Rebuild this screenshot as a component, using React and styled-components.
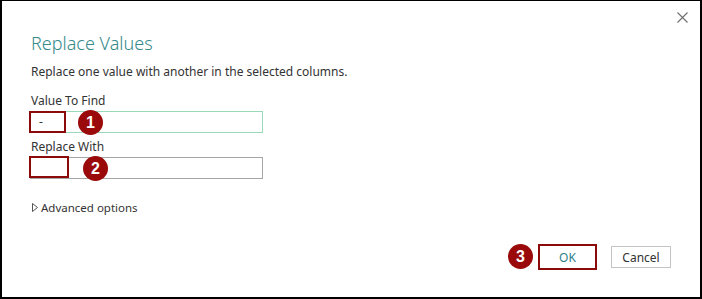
import React from 'react';
import styled, { createGlobalStyle } from 'styled-components';

const GlobalStyle = createGlobalStyle`
  html, body {
    margin: 0;
    padding: 0;
    background: #ffffff;
  }
  body {
    font-family: "Segoe UI", "Noto Sans", "Open Sans", sans-serif;
    color: #333333;
  }
`;

const Frame = styled.div`
  box-sizing: border-box;
  width: 702px;
  height: 299px;
  border-style: solid;
  border-color: #000000;
  border-width: 1px 2px 2px 2px;
  background: #ffffff;
  display: flex;
  flex-direction: column;
  position: relative;
`;

const TopBar = styled.div`
  display: flex;
  justify-content: flex-end;
  padding: 8px 10px 0 0;
  height: 16px;
`;

const CloseButton = styled.button`
  border: none;
  background: none;
  padding: 0;
  width: 16px;
  height: 16px;
  display: flex;
  align-items: center;
  justify-content: center;
  cursor: pointer;
`;

const Body = styled.div`
  display: flex;
  flex-direction: column;
  padding: 0 0 0 28px;
  flex: 1;
`;

const Title = styled.h1`
  margin: 6px 0 0 1px;
  font-size: 18px;
  font-weight: 300;
  color: #35898b;
  line-height: 24px;
`;

const Subtitle = styled.p`
  margin: 8px 0 0 1px;
  font-size: 12px;
  line-height: 17px;
  color: #333333;
`;

const Field = styled.div`
  display: flex;
  flex-direction: column;
  margin-top: ${p => p.gap}px;
`;

const Label = styled.label`
  margin-left: 1px;
  font-size: 12px;
  line-height: 17px;
  color: #333333;
`;

const InputWrap = styled.div`
  position: relative;
  width: 233px;
  margin-top: 2px;
`;

const TextInput = styled.div`
  box-sizing: border-box;
  width: 233px;
  height: 22px;
  border: 1px solid ${p => (p.focused ? '#99d9b8' : '#a6a6a6')};
  font-size: 12px;
  line-height: 20px;
  padding-left: 8px;
  color: #333333;
`;

const Highlight = styled.div`
  position: absolute;
  box-sizing: border-box;
  left: -1px;
  top: ${p => p.top}px;
  width: ${p => p.w}px;
  height: ${p => p.h}px;
  border: 2px solid #8b0a0a;
`;

const Badge = styled.div`
  position: absolute;
  box-sizing: border-box;
  left: ${p => p.x}px;
  top: ${p => p.y}px;
  width: 25px;
  height: 25px;
  border-radius: 50%;
  background: #9a0a0a;
  color: #ffffff;
  font-family: "Liberation Sans", Arial, sans-serif;
  font-weight: bold;
  font-size: 16px;
  line-height: 25px;
  text-align: center;
`;

const Advanced = styled.div`
  display: flex;
  align-items: center;
  gap: 3px;
  margin-top: 20px;
  margin-left: 2px;
  font-size: 11.5px;
  line-height: 17px;
  color: #333333;
`;

const Footer = styled.div`
  display: flex;
  justify-content: flex-end;
  align-items: center;
  gap: 14px;
  padding: 0 29px 0 0;
  margin-top: auto;
  margin-bottom: 27px;
`;

const ButtonSlot = styled.div`
  position: relative;
`;

const DialogButton = styled.button`
  box-sizing: border-box;
  width: ${p => (p.primary ? 59 : 60)}px;
  height: ${p => (p.primary ? 26 : 22)}px;
  border: ${p => (p.primary ? '2px solid #8b0a0a' : '1px solid #c4c4c4')};
  background: #ffffff;
  font-family: "Segoe UI", "Noto Sans", sans-serif;
  font-size: 12px;
  color: ${p => (p.primary ? '#2e7f86' : '#333333')};
  padding: 0;
  cursor: pointer;
`;

function CloseIcon() {
  return (
    <svg width="11" height="11" viewBox="0 0 11 11">
      <path d="M0.5 0.5 L10.5 10.5 M10.5 0.5 L0.5 10.5" stroke="#6e6e6e" strokeWidth="1.1" fill="none" />
    </svg>
  );
}

function Caret() {
  return (
    <svg width="6" height="9" viewBox="0 0 6 9">
      <path d="M0.5 0.5 L5.5 4.5 L0.5 8.5 Z" stroke="#555555" strokeWidth="1" fill="none" />
    </svg>
  );
}

export default function App() {
  return (
    <>
      <GlobalStyle />
      <Frame>
        <TopBar>
          <CloseButton aria-label="Close">
            <CloseIcon />
          </CloseButton>
        </TopBar>
        <Body>
          <Title>Replace Values</Title>
          <Subtitle>Replace one value with another in the selected columns.</Subtitle>

          <Field gap={12}>
            <Label>Value To Find</Label>
            <InputWrap>
              <TextInput focused>-</TextInput>
              <Highlight top={0} w={37} h={22} />
              <Badge x={48} y={-1}>1</Badge>
            </InputWrap>
          </Field>

          <Field gap={5}>
            <Label>Replace With</Label>
            <InputWrap>
              <TextInput />
              <Highlight top={-1} w={40} h={22} />
              <Badge x={53} y={-1}>2</Badge>
            </InputWrap>
          </Field>

          <Advanced>
            <Caret />
            <span>Advanced options</span>
          </Advanced>
        </Body>
        <Footer>
          <ButtonSlot>
            <Badge x={-30} y={0}>3</Badge>
            <DialogButton primary>OK</DialogButton>
          </ButtonSlot>
          <DialogButton>Cancel</DialogButton>
        </Footer>
      </Frame>
    </>
  );
}
